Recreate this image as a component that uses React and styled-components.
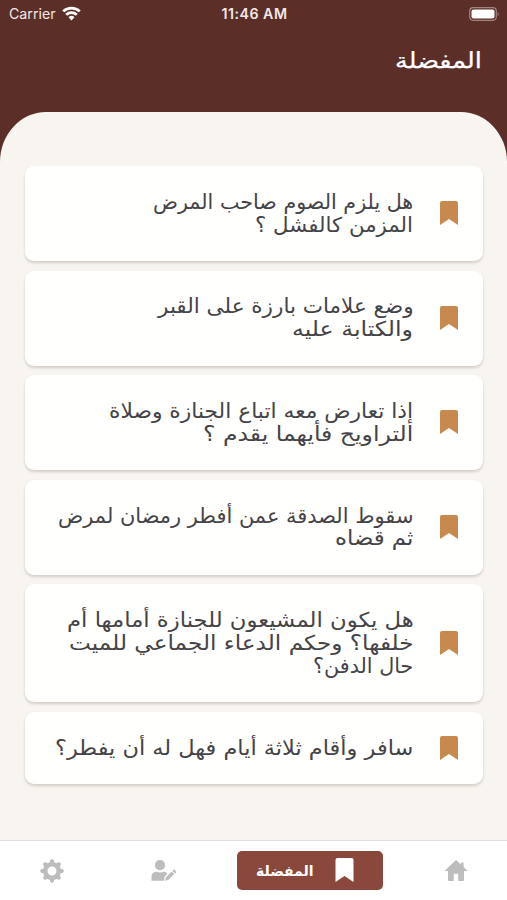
import { useLayoutEffect, useRef, useState } from "react";
import styled, { createGlobalStyle } from "styled-components";

const GlobalStyle = createGlobalStyle`
  * {
    box-sizing: border-box;
  }

  body {
    margin: 0;
    background: #f8f5f0;
  }
`;

const Screen = styled.div`
  width: 507px;
  height: 900px;
  display: flex;
  flex-direction: column;
  overflow: hidden;
  background: #5b2e28;
  font-family: "DejaVu Sans", sans-serif;
`;

const StatusBar = styled.div`
  height: 27px;
  flex: none;
  display: grid;
  grid-template-columns: 1fr auto 1fr;
  align-items: center;
  padding: 0 7px 0 9px;
  color: #f3e9e6;
  font-family: Inter, sans-serif;
  font-size: 14.2px;
`;

const Carrier = styled.div`
  display: flex;
  align-items: center;
  gap: 6px;
`;

const Time = styled.div`
  font-size: 14.2px;
  font-weight: 600;
  letter-spacing: 0.5px;
`;

const Battery = styled.svg`
  justify-self: end;
`;

const Header = styled.header`
  height: 85px;
  flex: none;
  direction: rtl;
  padding: 19px 25px 0;
  color: #fff;
`;

const Panel = styled.main`
  flex: 1;
  display: flex;
  flex-direction: column;
  gap: 9.5px;
  padding: 54px 24.5px 0 24.5px;
  border-radius: 46px 46px 0 0 / 50px 50px 0 0;
  background: #f8f5f0;
`;

const Card = styled.article`
  direction: rtl;
  display: flex;
  align-items: center;
  gap: 26.5px;
  padding: 24.8px 24.5px 24.5px;
  border-radius: 9px;
  background: #fffffe;
  box-shadow: 0 2px 3px rgba(60, 50, 40, 0.2);
`;

const Question = styled.div`
  color: #444346;
`;

const Line = styled.div`
  width: max-content;
  height: ${({ $height }) => $height}px;
  line-height: ${({ $height }) => $height}px;
  font-size: ${({ $size }) => $size}px;
  font-weight: ${({ $bold }) => ($bold ? 700 : 400)};
  -webkit-text-stroke: ${({ $stroke }) => $stroke}px currentColor;
  white-space: nowrap;
  transform-origin: right center;
`;

const NavBar = styled.nav`
  height: 60px;
  flex: none;
  direction: rtl;
  display: flex;
  align-items: center;
  gap: 61px;
  padding: 0 39px;
  border-top: 1px solid #e2e0de;
  background: #fff;
  color: #bdbdbd;
`;

const ActiveTab = styled.div`
  width: 146px;
  height: 39px;
  display: flex;
  align-items: center;
  gap: 21.5px;
  padding-right: 29px;
  border-radius: 5px;
  background: #89483b;
  color: #fff;
`;

const Icon = styled.svg`
  display: block;
  flex: none;
  fill: currentColor;
`;

const GearIcon = styled(Icon)`
  margin-right: auto;
`;

const BookmarkIcon = styled(Icon)`
  margin: -2px 0 -1px;
  color: ${({ $color }) => $color};
`;

const questions = [
  [
    ["هل يلزم الصوم صاحب المرض", 260],
    ["المزمن كالفشل ؟", 158],
  ],
  [
    ["وضع علامات بارزة على القبر", 256],
    ["والكتابة عليه", 121],
  ],
  [
    ["إذا تعارض معه اتباع الجنازة وصلاة", 304],
    ["التراويح فأيهما يقدم ؟", 210],
  ],
  [
    ["سقوط الصدقة عمن أفطر رمضان لمرض", 355],
    ["ثم قضاه", 78],
  ],
  [
    ["هل يكون المشيعون للجنازة أمامها أم", 347],
    ["خلفها؟ وحكم الدعاء الجماعي للميت", 345],
    ["حال الدفن؟", 100],
  ],
  [["سافر وأقام ثلاثة أيام فهل له أن يفطر؟", 358]],
];

// Condenses a line of text to the given width
function FitLine({ text, width, size = 20.5, height = 22.9, stroke = 0, bold }) {
  const ref = useRef(null);
  const [scale, setScale] = useState(1);

  useLayoutEffect(() => {
    setScale(width / ref.current.offsetWidth);
  }, [text, width]);

  return (
    <Line
      ref={ref}
      $size={size}
      $height={height}
      $stroke={stroke}
      $bold={bold}
      style={{ transform: `scaleX(${scale})` }}
    >
      {text}
    </Line>
  );
}

function Bookmark({ color, width = 18, height = 24 }) {
  return (
    <BookmarkIcon $color={color} width={width} height={height} viewBox="0 0 18 24">
      <path d="M2 0h14a2 2 0 0 1 2 2v22l-9-6-9 6V2a2 2 0 0 1 2-2z" />
    </BookmarkIcon>
  );
}

function Wifi() {
  return (
    <svg width="19" height="15" viewBox="0 0 19 15" fill="none" stroke="#fff" strokeWidth="2.7">
      <path d="M1.2 5.4a12 12 0 0 1 16.6 0" />
      <path d="M4.2 8.8a7.7 7.7 0 0 1 10.6 0" />
      <path d="M9.5 14.4 6.5 11.2a4.5 4.5 0 0 1 6 0z" fill="#fff" stroke="none" />
    </svg>
  );
}

function Home() {
  return (
    <Icon width="24" height="21" viewBox="0 0 24 21">
      <path d="M12 0 17 4.6V2.5h2.6V7L23.6 11H20v9a1 1 0 0 1-1 1h-4.8v-7.2H9.7V21H5a1 1 0 0 1-1-1v-9H.4z" />
    </Icon>
  );
}

function UserEdit() {
  return (
    <Icon width="25" height="21" viewBox="0 0 25 21">
      <circle cx="9" cy="5.2" r="5.1" />
      <path d="M0.5 20.7v-3.6c0-3.2 2-5.4 5-5.4 2.2 1 4.8 1 7 0 1.7 0 3 .5 3.9 1.8L13.5 17l-.4 3.7z" />
      <path d="m14.7 17.5 6-6 2.5 2.5-6 6-3 .7zM21.4 10.8l1-1q.6-.5 1.2 0l1.4 1.4q.5.6 0 1.2l-1 1z" />
    </Icon>
  );
}

function Gear() {
  return (
    <GearIcon width="26" height="24" viewBox="-13 -12 26 24">
      <circle r="6.8" fill="none" stroke="currentColor" strokeWidth="4.6" />
      {[0, 45, 90, 135, 180, 225, 270, 315].map((angle) => (
        <path
          key={angle}
          d="M-2.6-8-1.7-10.8Q0-12.8 1.7-10.8L2.6-8z"
          transform={`rotate(${angle})`}
        />
      ))}
    </GearIcon>
  );
}

export default function App() {
  return (
    <>
      <GlobalStyle />
      <Screen>
        <StatusBar>
          <Carrier>
            Carrier
            <Wifi />
          </Carrier>
          <Time>11:46 AM</Time>
          <Battery width="31" height="14" viewBox="0 0 31 14">
            <rect x="0.7" y="0.7" width="26.6" height="12.6" rx="3.5" fill="none" stroke="#a18480" strokeWidth="1.2" />
            <rect x="2.5" y="2.5" width="23" height="9" rx="2" fill="#fff" />
            <path d="M28.7 4.7q2 2.3 0 4.6z" fill="#a18480" />
          </Battery>
        </StatusBar>
        <Header>
          <FitLine text="المفضلة" width={87} size={22} height={30} stroke={0.25} />
        </Header>
        <Panel>
          {questions.map((lines) => (
            <Card key={lines[0][0]}>
              <Bookmark color="#c8894f" />
              <Question>
                {lines.map(([text, width]) => (
                  <FitLine key={text} text={text} width={width} />
                ))}
              </Question>
            </Card>
          ))}
        </Panel>
        <NavBar>
          <Home />
          <ActiveTab>
            <Bookmark color="#fff" width={19} />
            <FitLine text="المفضلة" width={58} size={14.5} height={24} bold />
          </ActiveTab>
          <UserEdit />
          <Gear />
        </NavBar>
      </Screen>
    </>
  );
}
